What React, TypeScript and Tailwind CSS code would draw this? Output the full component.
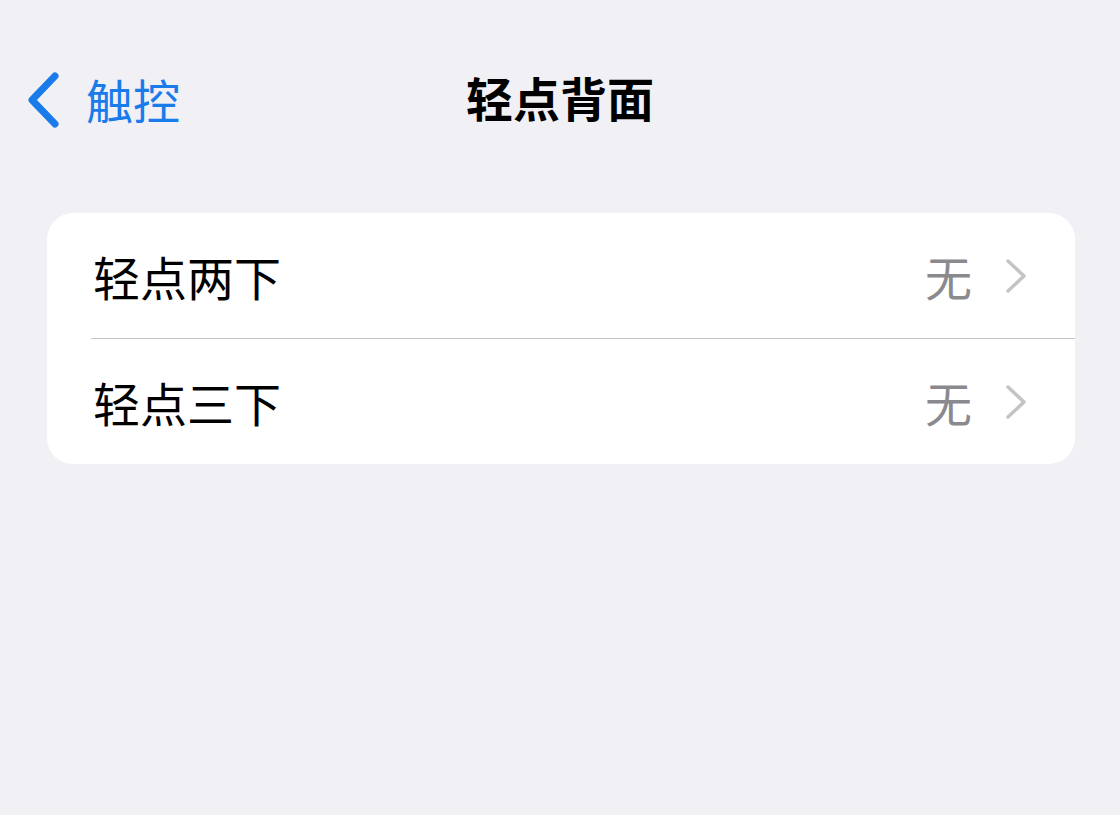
const rows = [
  { label: '轻点两下', value: '无' },
  { label: '轻点三下', value: '无' },
];

function Chevron() {
  return (
    <svg width="22" height="36" viewBox="0 0 22 36" fill="none" className="ml-[33px] text-[#c4c4c8]">
      <path d="M3 3 L19 18 L3 33" stroke="currentColor" strokeWidth="3.5" strokeLinecap="round" strokeLinejoin="round" />
    </svg>
  );
}

export default function App() {
  return (
    <div
      className="h-[815px] w-[1120px] overflow-hidden bg-[#f0f0f5]"
      style={{ fontFamily: '"Noto Sans CJK SC", "Noto Sans", sans-serif' }}
    >
      <div className="relative h-[200px]">
        <div className="absolute left-[24px] top-[72px] flex items-center gap-[24px] text-[#1a7bea]">
          <svg width="38" height="56" viewBox="0 0 38 56" fill="none">
            <path d="M31 4 L8 28 L31 52" stroke="currentColor" strokeWidth="7" strokeLinecap="round" strokeLinejoin="round" />
          </svg>
          <span className="-mt-[4px] text-[47px] leading-none">触控</span>
        </div>
        <h1 className="absolute left-0 right-0 top-[73px] text-center text-[47px] font-bold leading-none text-black">
          轻点背面
        </h1>
      </div>

      <div className="ml-[47px] mt-[13px] w-[1028px] overflow-hidden rounded-[26px] bg-white">
        {rows.map((row, i) => (
          <div key={row.label}>
            {i > 0 && <div className="ml-[44px] h-px bg-[#c8c8cc]" />}
            <div className="flex h-[125px] items-center pl-[46px] pr-[48px]">
              <span className="flex-1 text-[47px] leading-none text-black">{row.label}</span>
              <span className="text-[47px] leading-none text-[#8a8a8e]">{row.value}</span>
              <Chevron />
            </div>
          </div>
        ))}
      </div>
    </div>
  );
}
